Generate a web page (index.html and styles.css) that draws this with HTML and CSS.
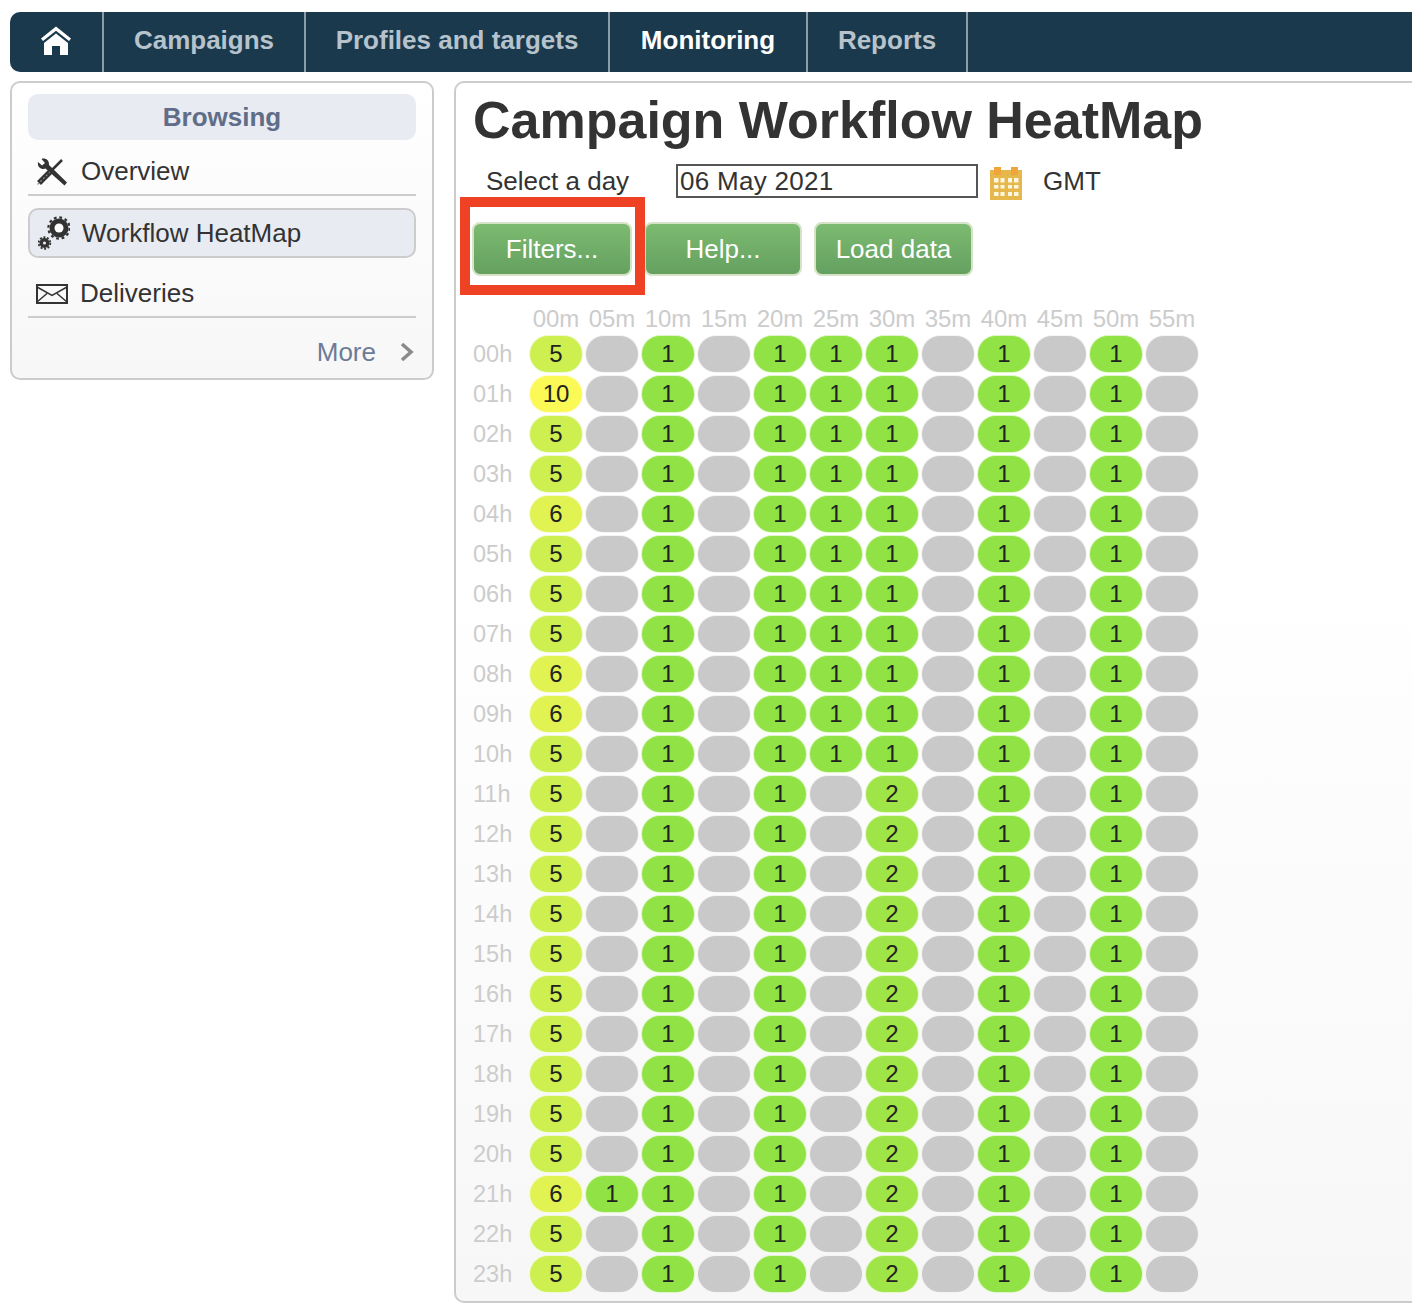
FILE: index.html
```html
<!DOCTYPE html>
<html lang="en">
<head>
    <meta charset="UTF-8">
    <title>Campaign Workflow HeatMap</title>
    <link rel="stylesheet" href="styles.css">
</head>
<body>
    <!-- Top navigation -->
    <nav class="topnav">
        <a class="nav-home">
            <svg width="32" height="30" viewBox="0 0 32 30">
                <path d="M16 0.500 L1 12.500 L3 15 L16 4.800 L29 15 L31 12.500 Z" fill="#fff"/>
                <path d="M16 7.500 L4 17 V29 H12 V20 H20 V29 H28 V17 Z" fill="#fff"/>
            </svg>
        </a>
        <a class="nav-item nav-campaigns">Campaigns</a>
        <a class="nav-item nav-profiles">Profiles and targets</a>
        <a class="nav-item nav-monitoring active">Monitoring</a>
        <a class="nav-item nav-reports">Reports</a>
    </nav>

    <div class="content">
        <!-- Left menu -->
        <aside class="sidebar">
            <div class="side-title">Browsing</div>
            <a class="side-link side-first">
                <svg class="side-icon" width="32" height="28" viewBox="0 0 32 28">
                    <path d="M3 25 L15 13" stroke="#333" stroke-width="5.500" fill="none"/>
                    <path d="M1.500 26.500 L14 14" stroke="#8a8a8a" stroke-width="1.200" stroke-dasharray="2 2" fill="none"/>
                    <path d="M15 13 L26 2" stroke="#333" stroke-width="2.500" fill="none"/>
                    <path d="M2 4 L6 7.500 L9 5 L5.500 1 C9 -0.500 13.500 2 13 7 L31 24.500 L28.500 27.500 L9.500 10.500 C5.500 12 1 9 2 4 Z" fill="#333"/>
                </svg>
                Overview
            </a>
            <a class="side-link side-active">
                <svg class="side-icon" width="32" height="34" viewBox="0 0 32 34">
                    <circle cx="21" cy="12" r="9.500" fill="#333"/>
                    <circle cx="21" cy="12" r="10.600" fill="none" stroke="#333" stroke-width="2.200" stroke-dasharray="2.780 2.770"/>
                    <circle cx="21" cy="12" r="4.500" fill="#fff"/>
                    <circle cx="6.500" cy="27" r="5" fill="#333"/>
                    <circle cx="6.500" cy="27" r="5.800" fill="none" stroke="#333" stroke-width="1.800" stroke-dasharray="2 1.640"/>
                    <circle cx="6.500" cy="27" r="1.600" fill="#e8ebf1"/>
                </svg>
                Workflow HeatMap
            </a>
            <a class="side-link side-last">
                <svg class="side-icon" width="32" height="20" viewBox="0 0 32 20">
                    <rect x="1" y="1" width="30" height="18" fill="none" stroke="#333" stroke-width="2"/>
                    <path d="M1 3 L16 11.500 L31 3 M1 18 L11 9.500 M31 18 L21 9.500" fill="none" stroke="#333" stroke-width="1.500"/>
                </svg>
                Deliveries
            </a>
            <div class="side-more">
                More
                <svg width="14" height="20" viewBox="0 0 14 20">
                    <path d="M2 2 L11 10 L2 18" fill="none" stroke="#8a8a8a" stroke-width="3.500"/>
                </svg>
            </div>
        </aside>

        <!-- Main panel -->
        <main class="panel">
            <h1>Campaign Workflow HeatMap</h1>
            <div class="day-row">
                <label class="day-label">Select a day</label>
                <input class="day-input" type="text" value="06 May 2021">
                <svg class="cal" width="32" height="33" viewBox="0 0 32 33">
                    <rect y="3" width="32" height="30" fill="#e6b84c"/>
                    <rect x="4" width="7" height="8" fill="#eda53c"/>
                    <rect x="21" width="7" height="8" fill="#eda53c"/>
                    <g fill="#fdf6e0">
                        <rect x="4" y="11" width="4.500" height="4.500"/>
                        <rect x="10.500" y="11" width="4" height="4.500"/>
                        <rect x="18" y="11" width="4" height="4.500"/>
                        <rect x="24" y="11" width="4.500" height="4.500"/>
                        <rect x="4" y="18" width="4.500" height="3.500"/>
                        <rect x="10.500" y="18" width="4" height="3.500"/>
                        <rect x="18" y="18" width="4" height="3.500"/>
                        <rect x="24" y="18" width="4.500" height="3.500"/>
                        <rect x="4" y="25" width="4.500" height="4"/>
                        <rect x="10.500" y="25" width="4" height="4"/>
                        <rect x="18" y="25" width="4" height="4"/>
                        <rect x="24" y="25" width="4.500" height="4"/>
                    </g>
                </svg>
                <span class="tz">GMT</span>
            </div>
            <div class="btn-row">
                <button class="btn btn-filters">Filters...</button>
                <button class="btn btn-help">Help...</button>
                <button class="btn btn-load">Load data</button>
            </div>
            <div class="heatmap" id="heatmap"></div>
            <!-- Annotation over the Filters button -->
            <div class="callout"></div>
        </main>
    </div>

    <script src="heatmap.js"></script>
</body>
</html>
```

FILE: styles.css
```css
* {
    box-sizing: border-box;
}
body {
    font-family: "Liberation Sans", Arial, sans-serif;
    margin: 0;
    padding: 12px 0 0 10px;
    width: 1412px;
    height: 1314px;
    overflow: hidden;
    background: #fff;
    color: #333;
}
.topnav {
    display: flex;
    height: 60px;
    background: #1b394d;
    border-radius: 10px 0 0 10px;
}
.topnav a {
    display: flex;
    align-items: center;
    justify-content: center;
    padding-bottom: 3px;
    border-right: 2px solid #8d9da8;
    color: #b6c3cc;
    font-size: 26px;
    font-weight: bold;
}
.nav-home {
    width: 94px;
}
.nav-campaigns {
    width: 202px;
}
.nav-profiles {
    width: 304px;
}
.nav-monitoring {
    width: 198px;
}
.nav-reports {
    width: 160px;
}
.topnav a.active {
    color: #fff;
}
.content {
    display: flex;
    align-items: flex-start;
    margin-top: 9px;
    gap: 20px;
}
.sidebar {
    width: 424px;
    height: 299px;
    padding: 11px 16px 0;
    border: 2px solid #ccc;
    border-radius: 10px;
    background: linear-gradient(#fff, #f7f7f7);
    font-size: 26px;
}
.side-title {
    height: 46px;
    line-height: 46px;
    text-align: center;
    font-weight: bold;
    color: #5f6d88;
    background: #e8ebf1;
    border-radius: 10px;
}
.side-link {
    display: flex;
    align-items: center;
    color: #333;
}
.side-first {
    height: 56px;
    padding: 9px 0 0 8px;
    border-bottom: 2px solid #ccc;
}
.side-active {
    height: 50px;
    margin-top: 12px;
    padding-left: 8px;
    border: 2px solid #ccc;
    border-radius: 10px;
    background: #e8ebf1;
}
.side-last {
    height: 59px;
    margin-top: 1px;
    padding: 12px 0 0 8px;
    border-bottom: 2px solid #ccc;
}
.side-icon {
    margin-right: 13px;
}
.side-active .side-icon {
    margin-right: 12px;
}
.side-last .side-icon {
    margin-right: 12px;
}
.side-more {
    display: flex;
    align-items: center;
    justify-content: flex-end;
    gap: 24px;
    height: 68px;
    padding: 0 2px 0 0;
    color: #6c7c96;
}
.panel {
    position: relative;
    flex: 1;
    height: 1222px;
    padding: 7px 0 0 15px;
    border: 2px solid #ccc;
    border-right: none;
    border-radius: 10px 0 0 10px;
    background: linear-gradient(#fff 40%, #f7f7f7 100%);
}
h1 {
    margin: 0;
    height: 60px;
    padding-left: 2px;
    line-height: 60px;
    font-size: 52px;
    font-weight: bold;
    color: #333;
}
.day-row {
    display: flex;
    align-items: center;
    height: 36px;
    margin-top: 13px;
    font-size: 26px;
}
.day-label {
    width: 205px;
    padding-left: 15px;
}
.day-input {
    width: 302px;
    height: 34px;
    padding: 0 2px;
    border: 2px solid #555;
    background: #fff;
    font-family: inherit;
    font-size: 26px;
    color: #333;
    outline: none;
    letter-spacing: 0.3px;
}
.cal {
    margin-left: 12px;
    margin-top: 5px;
}
.tz {
    margin-left: 21px;
}
.btn-row {
    display: flex;
    gap: 12px;
    margin-top: 23px;
    margin-left: 1px;
}
.btn {
    height: 54px;
    padding: 0;
    border: 2px solid #d5e3c6;
    border-radius: 8px;
    background: linear-gradient(#7cbb71, #65a060);
    color: #fff;
    font-family: inherit;
    font-size: 26px;
}
.btn-filters {
    width: 160px;
}
.btn-help {
    width: 158px;
}
.btn-load {
    width: 159px;
}
.heatmap {
    display: grid;
    grid-template-columns: 55px repeat(12, 56px);
    grid-template-rows: 32px;
    grid-auto-rows: 40px;
    margin-top: 26px;
    margin-left: 2px;
    font-size: 24px;
}
.hm-head,
.hm-hour {
    display: flex;
    align-items: center;
    color: #ccc;
}
.hm-head {
    justify-content: center;
    height: 34px;
}
.hm-hour {
    font-size: 23.5px;
}
.hm-cell {
    display: flex;
    align-items: center;
    justify-content: center;
    width: 52px;
    height: 36px;
    margin: 2px;
    border-radius: 18px;
    color: #222;
    background: #c9c9c9;
    box-shadow: 0 0 0 1px #f4f4f4;
}
.lvl-1 {
    background: #90e245;
    box-shadow: 0 0 0 1px #e0f6c8;
}
.lvl-2 {
    background: #a0e548;
    box-shadow: 0 0 0 1px #e4f7c8;
}
.lvl-5 {
    background: #cdf050;
    box-shadow: 0 0 0 1px #f0fad0;
}
.lvl-6 {
    background: #e1f353;
    box-shadow: 0 0 0 1px #f6fbd0;
}
.lvl-10 {
    background: #fbf955;
    box-shadow: 0 0 0 1px #fefcd0;
}
.callout {
    position: absolute;
    left: 4px;
    top: 114px;
    width: 185px;
    height: 98px;
    border: 10px solid #ef4123;
}
```

FILE: heatmap.js
```js
const minutes = ['00', '05', '10', '15', '20', '25', '30', '35', '40', '45', '50', '55'];
const firstColumn = [5, 10, 5, 5, 6, 5, 5, 5, 6, 6, 5, 5, 5, 5, 5, 5, 5, 5, 5, 5, 5, 6, 5, 5];
const early = [0, 1, 0, 1, 1, 1, 0, 1, 0, 1, 0];
const late = [0, 1, 0, 1, 0, 2, 0, 1, 0, 1, 0];

const heatmap = document.getElementById('heatmap');

function addCell(className, text) {
    const el = document.createElement('div');
    el.className = className;
    el.textContent = text;
    heatmap.appendChild(el);
}

addCell('hm-row-head', '');
minutes.forEach(m => addCell('hm-head', m + 'm'));

firstColumn.forEach((first, hour) => {
    const rest = (hour <= 10 ? early : late).slice();
    if (hour === 21) rest[0] = 1;
    addCell('hm-hour', String(hour).padStart(2, '0') + 'h');
    [first].concat(rest).forEach(v => {
        addCell(v ? 'hm-cell lvl-' + v : 'hm-cell', v || '');
    });
});
```
